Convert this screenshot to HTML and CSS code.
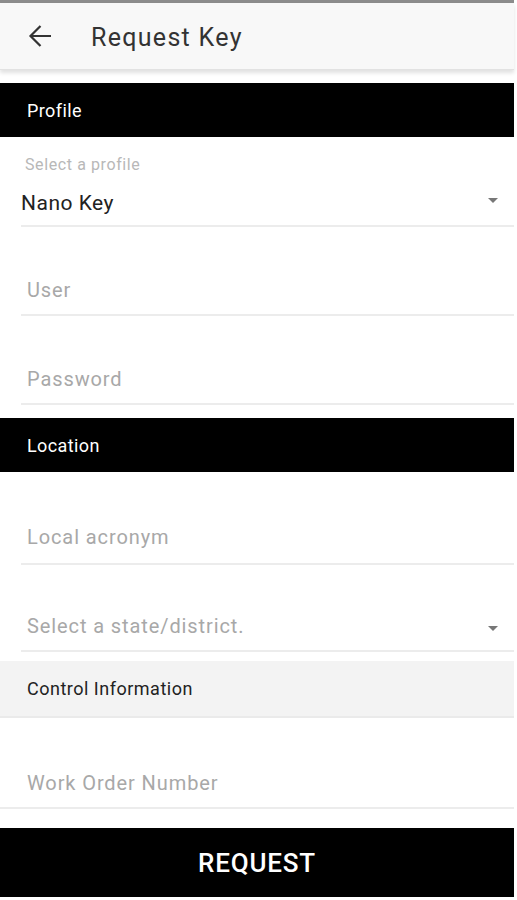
FILE: index.html
```html
<!DOCTYPE html>
<html lang="en">
<head>
    <meta charset="UTF-8">
    <meta name="viewport" content="width=device-width, initial-scale=1.0">
    <title>Request Key</title>
    <link rel="stylesheet" href="styles.css">
</head>
<body>
    <div class="app">
        <div class="toolbar">
            <button class="back" aria-label="Back">
                <svg width="24" height="24" viewBox="0 0 24 24">
                    <path d="M23 12H2.5M12.5 2L2.5 12l10 10" fill="none" stroke="#333" stroke-width="2.2"/>
                </svg>
            </button>
            <h1>Request Key</h1>
        </div>

        <div class="section-bar">Profile</div>

        <div class="field select-field">
            <label class="float-label">Select a profile</label>
            <div class="select-value">Nano Key</div>
            <span class="caret"></span>
        </div>
        <div class="field">
            <input type="text" placeholder="User">
        </div>
        <div class="field">
            <input type="password" placeholder="Password">
        </div>

        <div class="section-bar">Location</div>

        <div class="field first">
            <input type="text" placeholder="Local acronym">
        </div>
        <div class="field state">
            <input type="text" placeholder="Select a state/district.">
            <span class="caret"></span>
        </div>

        <div class="sub-bar">Control Information</div>

        <div class="field full">
            <input type="text" placeholder="Work Order Number">
        </div>

        <button class="request">REQUEST</button>
    </div>
</body>
</html>
```

FILE: styles.css
```css
body {
    margin: 0;
    padding: 0;
    background-color: #fff;
    font-family: Roboto, "Noto Sans", sans-serif;
}

.app {
    width: 514px;
    border-top: 3px solid #8c8c8c;
}

.toolbar {
    height: 67px;
    background-color: #f8f8f8;
    display: flex;
    align-items: center;
    padding-left: 28px;
    box-shadow: 0px 3px 4px rgba(0, 0, 0, 0.12);
    border-bottom: 1px solid #e2e2e2;
    box-sizing: border-box;
}

.back {
    border: none;
    background: none;
    padding: 0;
    width: 24px;
    height: 24px;
    display: flex;
}

.toolbar h1 {
    margin: 2px 0 0 39px;
    font-size: 25px;
    font-weight: 400;
    letter-spacing: 1.3px;
    color: #333;
}

.section-bar {
    margin-top: 13px;
    height: 54px;
    background-color: #000;
    color: #fff;
    font-size: 18px;
    letter-spacing: 0.4px;
    display: flex;
    align-items: center;
    padding-left: 27px;
}

.field {
    position: relative;
    margin-left: 21px;
    padding: 51px 0 12px 0;
    border-bottom: 2px solid #ececec;
}

.field.first {
    padding-top: 53px;
    padding-bottom: 14px;
}

.field.state {
    padding-top: 49px;
    padding-bottom: 12px;
}

.field.full {
    margin-left: 0;
    padding-top: 53px;
    padding-bottom: 12px;
}

.field.full input {
    padding-left: 27px;
}

input {
    display: block;
    width: 100%;
    box-sizing: border-box;
    border: none;
    outline: none;
    height: 24px;
    padding: 0 0 0 6px;
    font-family: Roboto, "Noto Sans", sans-serif;
    font-size: 20px;
    letter-spacing: 0.9px;
    color: #222;
    background: transparent;
}

input::placeholder {
    color: #a8a8a8;
}

.select-field {
    padding: 19px 0 10px 0;
}

.float-label {
    display: block;
    padding-left: 4px;
    font-size: 16px;
    line-height: 18px;
    letter-spacing: 0.6px;
    color: #b8b8b8;
}

.select-value {
    margin-top: 17px;
    font-size: 21px;
    line-height: 24px;
    letter-spacing: 0.5px;
    color: #222;
}

.caret {
    position: absolute;
    right: 16px;
    bottom: 24px;
    width: 0;
    height: 0;
    border-left: 5px solid transparent;
    border-right: 5px solid transparent;
    border-top: 5px solid #777;
}

.select-field .caret {
    bottom: 22px;
}

.field.state .caret {
    bottom: 19px;
}

.sub-bar {
    margin-top: 9px;
    height: 57px;
    box-sizing: border-box;
    background-color: #f3f3f3;
    border-bottom: 2px solid #eaeaea;
    color: #222;
    font-size: 18px;
    letter-spacing: 0.5px;
    display: flex;
    align-items: center;
    padding-left: 27px;
}

.request {
    display: block;
    margin-top: 19px;
    width: 100%;
    height: 69px;
    border: none;
    background-color: #000;
    color: #fff;
    font-family: Roboto, "Noto Sans", sans-serif;
    font-size: 26px;
    font-weight: 500;
    letter-spacing: 0.8px;
    cursor: pointer;
}
```
